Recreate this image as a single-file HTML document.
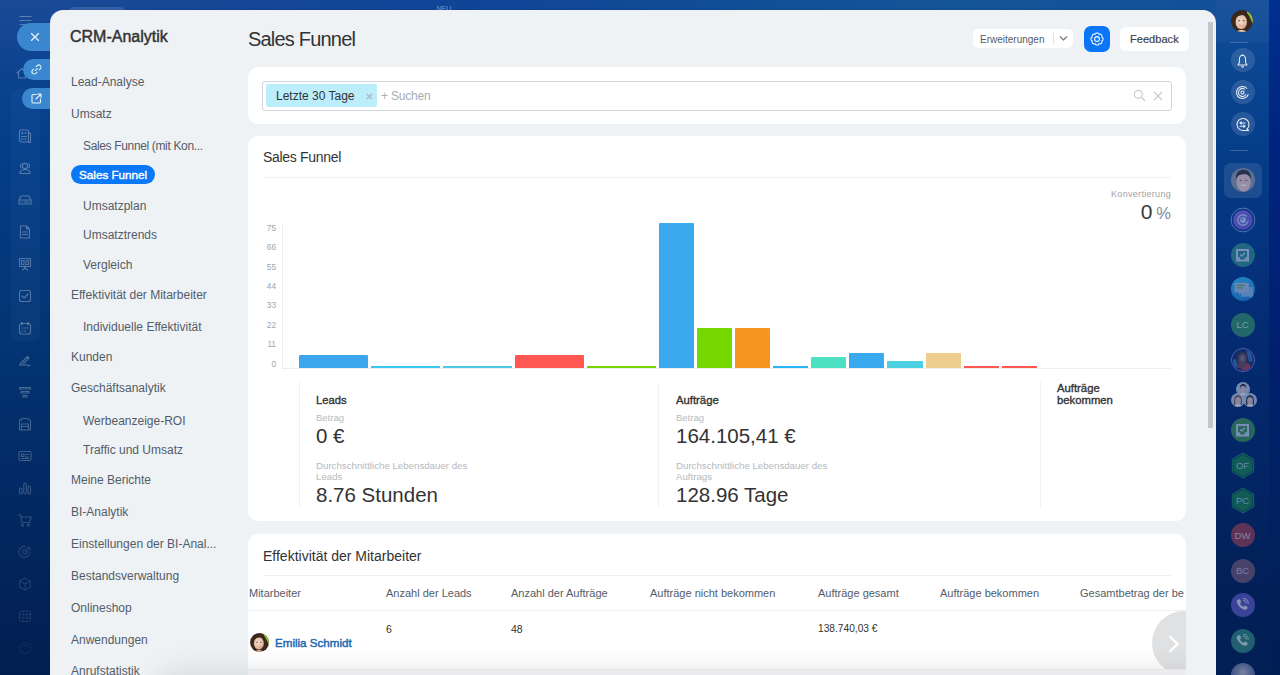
<!DOCTYPE html>
<html><head><meta charset="utf-8">
<style>
*{box-sizing:border-box;margin:0;padding:0}
html,body{width:1280px;height:675px;overflow:hidden}
body{font-family:"Liberation Sans",sans-serif;position:relative;background:linear-gradient(180deg,#1b4d9c 0%,#123f8a 40%,#0b2b68 100%);color:#333}
.a{position:absolute}
.t{position:absolute;white-space:nowrap;line-height:1}
.menu{position:absolute;font-size:12px;color:#535c69;white-space:nowrap;line-height:1}
.card{position:absolute;background:#fff;border-radius:10px}
.yl{position:absolute;font-size:8.3px;color:#9ea4ab;text-align:right;width:20px;left:256px;line-height:1}
.bar{position:absolute}
.th{position:absolute;font-size:11px;color:#535c69;white-space:nowrap;line-height:1;margin-top:-1px}
.li{position:absolute;left:15px;width:20px;height:20px}
.rc{position:absolute;left:1230px;width:25px;height:25px;border-radius:50%}
</style></head>
<body>
<!-- top bar -->
<div class="a" style="left:0;top:0;width:1280px;height:12px;background:linear-gradient(90deg,#1a4a96 0%,#0f4497 36%,#145596 75%,#144e9a 100%)"></div><div class="a" style="left:64px;top:8px;width:1138px;height:3px;background:linear-gradient(180deg,rgba(0,30,90,0) 0%,rgba(0,30,90,0.2) 100%)"></div>
<div class="a" style="left:68px;top:7px;width:58px;height:12px;border-radius:6px;background:rgba(255,255,255,0.13)"></div><div class="t" style="left:436.5px;top:5px;font-size:7px;color:rgba(255,255,255,0.45)">NEU</div>

<!-- left bar -->
<div class="a" style="left:0;top:0;width:50px;height:675px;background:linear-gradient(180deg,#1a4a96 0%,#0a4290 12%,#033e88 23%,#033473 51%,#022258 89%,#01204f 100%)"></div>
<div class="a" style="left:11px;top:89px;width:29px;height:252px;border-radius:8px;background:rgba(160,190,230,0.045)"></div>
<svg class="a" style="left:14px;top:65px" width="16" height="16" viewBox="0 0 16 16"><g fill="none" stroke="rgba(255,255,255,0.30)" stroke-width="1.1" stroke-linecap="round" stroke-linejoin="round"><path d="M3 8 L8 3.5 L13 8 M4.5 7 V13 H11.5 V7" /></g></svg>
<svg class="a" style="left:17px;top:128px" width="16" height="16" viewBox="0 0 16 16"><g fill="none" stroke="rgba(255,255,255,0.30)" stroke-width="1.1" stroke-linecap="round" stroke-linejoin="round"><rect x="2.5" y="2" width="9" height="12" rx="1.5"/><path d="M11.5 5 H13.5 V13 A1 1 0 0 1 11.5 14 M4.5 5 H6 M5.2 4.3 V5.7 M7.5 5 H9.5 M4.5 8.5 H9.5 M4.5 11 H9"/></g></svg>
<svg class="a" style="left:17px;top:160px" width="16" height="16" viewBox="0 0 16 16"><g fill="none" stroke="rgba(255,255,255,0.30)" stroke-width="1.1" stroke-linecap="round" stroke-linejoin="round"><circle cx="8" cy="6" r="2.6"/><path d="M3 13.5 C3 10.5 5 9.5 8 9.5 C11 9.5 13 10.5 13 13.5 Z M4.2 3.8 C3.2 4.8 3.2 6.8 4.2 7.8 M11.8 3.8 C12.8 4.8 12.8 6.8 11.8 7.8"/></g></svg>
<svg class="a" style="left:17px;top:192px" width="16" height="16" viewBox="0 0 16 16"><g fill="none" stroke="rgba(255,255,255,0.30)" stroke-width="1.1" stroke-linecap="round" stroke-linejoin="round"><path d="M2 8 L4 4 H12 L14 8 V12 H2 Z M2 8 H14 M4.5 10 H5 M7 10 H11.5"/></g></svg>
<svg class="a" style="left:17px;top:224px" width="16" height="16" viewBox="0 0 16 16"><g fill="none" stroke="rgba(255,255,255,0.30)" stroke-width="1.1" stroke-linecap="round" stroke-linejoin="round"><path d="M3.5 2 H9.5 L12.5 5 V14 H3.5 Z M9.5 2 V5 H12.5 M5.5 8 H10.5 M5.5 10.5 H10.5"/></g></svg>
<svg class="a" style="left:17px;top:256px" width="16" height="16" viewBox="0 0 16 16"><g fill="none" stroke="rgba(255,255,255,0.30)" stroke-width="1.1" stroke-linecap="round" stroke-linejoin="round"><rect x="2.5" y="2.5" width="11" height="8"/><path d="M8 10.5 V12 M5.5 14 L8 12 L10.5 14 M4.5 4.5 H7 V8.5 H4.5 Z M9 4.5 H11.5 V8.5 H9 Z"/></g></svg>
<svg class="a" style="left:17px;top:288px" width="16" height="16" viewBox="0 0 16 16"><g fill="none" stroke="rgba(255,255,255,0.30)" stroke-width="1.1" stroke-linecap="round" stroke-linejoin="round"><rect x="2.5" y="2.5" width="11" height="11" rx="2"/><path d="M5 8 L7.2 10 L11 6"/></g></svg>
<svg class="a" style="left:17px;top:320px" width="16" height="16" viewBox="0 0 16 16"><g fill="none" stroke="rgba(255,255,255,0.30)" stroke-width="1.1" stroke-linecap="round" stroke-linejoin="round"><rect x="2.5" y="3.5" width="11" height="10.5" rx="2"/><path d="M5 2 V5 M11 2 V5 M5 8 H6 M7.5 8 H8.5 M10 8 H11 M5 11 H6 M7.5 11 H8.5"/></g></svg>
<svg class="a" style="left:17px;top:352px" width="16" height="16" viewBox="0 0 16 16"><g fill="none" stroke="rgba(255,255,255,0.29)" stroke-width="1.1" stroke-linecap="round" stroke-linejoin="round"><path d="M3.5 11.5 L10.5 4.5 L12 6 L5 13 L3 13.5 Z M9.5 5.5 L11 7 M7 13.5 C8.5 12 10 12.5 10.5 13.5 C11 14 12 14 13 13"/></g></svg>
<svg class="a" style="left:17px;top:384px" width="16" height="16" viewBox="0 0 16 16"><g fill="none" stroke="rgba(255,255,255,0.28)" stroke-width="1.1" stroke-linecap="round" stroke-linejoin="round"><path d="M2.5 3.5 H13.5 V5 H2.5 Z M4 7.5 H12 V9 H4 Z M6 11.5 H10 V13 H6 Z"/></g></svg>
<svg class="a" style="left:17px;top:416px" width="16" height="16" viewBox="0 0 16 16"><g fill="none" stroke="rgba(255,255,255,0.26)" stroke-width="1.1" stroke-linecap="round" stroke-linejoin="round"><path d="M2.5 14 V6 C2.5 3.5 4 2.5 8 2.5 C12 2.5 13.5 3.5 13.5 6 V14 Z M4.5 14 V8 H11.5 V14 M4.5 10.5 H11.5"/></g></svg>
<svg class="a" style="left:17px;top:448px" width="16" height="16" viewBox="0 0 16 16"><g fill="none" stroke="rgba(255,255,255,0.25)" stroke-width="1.1" stroke-linecap="round" stroke-linejoin="round"><rect x="2" y="3.5" width="12" height="9" rx="1.5"/><path d="M4.5 6 H7 V8.5 H4.5 Z M8.5 6.5 H11.5 M8.5 9 H11.5 M4.5 10.5 H11.5"/></g></svg>
<svg class="a" style="left:17px;top:480px" width="16" height="16" viewBox="0 0 16 16"><g fill="none" stroke="rgba(255,255,255,0.22)" stroke-width="1.1" stroke-linecap="round" stroke-linejoin="round"><rect x="2.5" y="8" width="2.5" height="6" rx="1.2"/><rect x="6.8" y="3" width="2.5" height="11" rx="1.2"/><rect x="11" y="6" width="2.5" height="8" rx="1.2"/></g></svg>
<svg class="a" style="left:17px;top:512px" width="16" height="16" viewBox="0 0 16 16"><g fill="none" stroke="rgba(255,255,255,0.19)" stroke-width="1.1" stroke-linecap="round" stroke-linejoin="round"><path d="M1.5 3 H3.5 L5 10.5 H12.5 L14 5 H4"/><circle cx="5.5" cy="13" r="1"/><circle cx="11.5" cy="13" r="1"/></g></svg>
<svg class="a" style="left:17px;top:544px" width="16" height="16" viewBox="0 0 16 16"><g fill="none" stroke="rgba(255,255,255,0.15)" stroke-width="1.1" stroke-linecap="round" stroke-linejoin="round"><path d="M13 7.5 A5.5 5.5 0 1 1 8.5 2.5 M10.5 7.5 A2.5 2.5 0 1 1 8.5 5.2 M8 8 L12.5 3.5 M10.5 3 L12.5 3.5 L13 5.5"/></g></svg>
<svg class="a" style="left:17px;top:576px" width="16" height="16" viewBox="0 0 16 16"><g fill="none" stroke="rgba(255,255,255,0.12)" stroke-width="1.1" stroke-linecap="round" stroke-linejoin="round"><path d="M8 2 L13.5 5 V11 L8 14 L2.5 11 V5 Z M2.5 5 L8 8 L13.5 5 M8 8 V14"/></g></svg>
<svg class="a" style="left:17px;top:608px" width="16" height="16" viewBox="0 0 16 16"><g fill="none" stroke="rgba(255,255,255,0.09)" stroke-width="1.1" stroke-linecap="round" stroke-linejoin="round"><rect x="2.5" y="3" width="11" height="10.5" rx="1.5"/><path d="M2.5 6.5 H13.5 M2.5 10 H13.5 M6 3 V13.5 M10 3 V13.5"/></g></svg>
<svg class="a" style="left:17px;top:640px" width="16" height="16" viewBox="0 0 16 16"><g fill="none" stroke="rgba(255,255,255,0.06)" stroke-width="1.1" stroke-linecap="round" stroke-linejoin="round"><circle cx="8" cy="8" r="5.5"/><path d="M6 6.5 C6.5 5 9.5 5 10 6.5"/></g></svg>
<svg class="a" style="left:19px;top:15px" width="13" height="11" viewBox="0 0 13 11"><path d="M0.5 1.5H12.5M0.5 5.5H12.5M0.5 9.5H12.5" stroke="rgba(255,255,255,0.3)" stroke-width="1"/></svg>

<!-- right bar -->
<div class="a" style="left:1216px;top:0;width:53px;height:675px;background:linear-gradient(180deg,#144e9a 0%,#0b4692 10%,#053e8a 21%,#042b72 50%,#022058 87%,#021f55 100%)"></div>
<div class="a" style="left:1216px;top:0;width:53px;height:42px;background:rgba(255,255,255,0.03)"></div>
<div class="a" style="left:1269px;top:0;width:11px;height:675px;background:linear-gradient(180deg,#00308f 0%,#00247f 21%,#002070 50%,#01205a 87%,#011e55 100%)"></div>
<div class="a" style="left:1230px;top:42px;width:18px;height:1px;background:rgba(255,255,255,0.2)"></div>
<div class="a" style="left:1230px;top:150px;width:18px;height:1px;background:rgba(255,255,255,0.2)"></div>

<!-- close / link / open pills -->
<div class="a" style="left:17px;top:23px;width:60px;height:28px;border-radius:14px;background:#3a87cf"></div>
<div class="a" style="left:23px;top:59px;width:50px;height:21px;border-radius:11px;background:#3a87cf"></div>
<div class="a" style="left:22px;top:88px;width:50px;height:21px;border-radius:11px;background:#3a87cf"></div>
<svg class="a" style="left:30px;top:32px" width="10" height="10" viewBox="0 0 10 10"><path d="M1.2 1.2L8.8 8.8M8.8 1.2L1.2 8.8" stroke="#e8f1fa" stroke-width="1.3"/></svg>
<svg class="a" style="left:29.5px;top:63px" width="13" height="13" viewBox="0 0 13 13"><g fill="none" stroke="#e8f1fa" stroke-width="1.15" stroke-linecap="round" transform="translate(6.5 6.5) scale(0.9) translate(-6.5 -6.5)"><path d="M5.5 7.5 L7.5 5.5"/><path d="M6 3.5 L7.3 2.2 A2.1 2.1 0 0 1 10.8 5.7 L9.5 7"/><path d="M7 9.5 L5.7 10.8 A2.1 2.1 0 0 1 2.2 7.3 L3.5 6"/></g></svg>
<svg class="a" style="left:29.5px;top:91.5px" width="13" height="13" viewBox="0 0 13 13"><g fill="none" stroke="#e8f1fa" stroke-width="1.1" stroke-linecap="round" stroke-linejoin="round"><path d="M6 2.5 H3 A1 1 0 0 0 2 3.5 V10 A1 1 0 0 0 3 11 H9.5 A1 1 0 0 0 10.5 10 V7"/><path d="M7.5 2 H11 V5.5 M11 2 L6 7"/></g></svg>

<!-- panel -->
<div class="a" style="left:50px;top:10px;width:1166px;height:700px;background:#eef2f4;border-radius:13px 13px 0 0"></div>
<!-- scrollbar -->
<div class="a" style="left:1208px;top:22px;width:5px;height:406px;background:#c4c8cb"></div>

<!-- left menu -->
<div class="t" style="left:70px;top:28.5px;font-size:16px;color:#333;-webkit-text-stroke:0.45px #333">CRM-Analytik</div>
<div class="menu" style="left:71px;top:76px">Lead-Analyse</div>
<div class="menu" style="left:71px;top:108px">Umsatz</div>
<div class="menu" style="left:83px;top:140px;letter-spacing:-0.35px">Sales Funnel (mit Kon...</div>
<div class="a" style="left:71px;top:165px;width:84px;height:19px;border-radius:10px;background:#0b78f7"></div>
<div class="menu" style="left:79px;top:168.5px;color:#fff;font-size:11.7px;-webkit-text-stroke:0.4px #fff">Sales Funnel</div>
<div class="menu" style="left:83px;top:200px">Umsatzplan</div>
<div class="menu" style="left:83px;top:229px">Umsatztrends</div>
<div class="menu" style="left:83px;top:259px">Vergleich</div>
<div class="menu" style="left:71px;top:289px">Effektivität der Mitarbeiter</div>
<div class="menu" style="left:83px;top:321px">Individuelle Effektivität</div>
<div class="menu" style="left:71px;top:351px">Kunden</div>
<div class="menu" style="left:71px;top:382px">Geschäftsanalytik</div>
<div class="menu" style="left:83px;top:415px">Werbeanzeige-ROI</div>
<div class="menu" style="left:83px;top:444px">Traffic und Umsatz</div>
<div class="menu" style="left:71px;top:474px">Meine Berichte</div>
<div class="menu" style="left:71px;top:506px">BI-Analytik</div>
<div class="menu" style="left:71px;top:538px">Einstellungen der BI-Anal...</div>
<div class="menu" style="left:71px;top:570px">Bestandsverwaltung</div>
<div class="menu" style="left:71px;top:602px">Onlineshop</div>
<div class="menu" style="left:71px;top:634px">Anwendungen</div>
<div class="menu" style="left:71px;top:665px">Anrufstatistik</div>

<!-- title -->
<div class="t" style="left:248px;top:29px;font-size:20px;color:#333;letter-spacing:-0.8px">Sales Funnel</div>

<!-- header buttons -->
<div class="a" style="left:973px;top:29px;width:100px;height:19px;border-radius:5px;background:#fff"></div>
<div class="t" style="left:980px;top:35px;font-size:10px;color:#535c69">Erweiterungen</div>
<div class="a" style="left:1053px;top:33px;width:1px;height:11px;background:#dfe3e6"></div>
<svg class="a" style="left:1059px;top:35px" width="9" height="7" viewBox="0 0 9 7"><path d="M1 1.5 L4.5 5 L8 1.5" fill="none" stroke="#6a737f" stroke-width="1.1"/></svg>
<div class="a" style="left:1084px;top:26px;width:26px;height:26px;border-radius:7px;background:#0b75f8"></div>
<svg class="a" style="left:1088.6px;top:30.6px" width="16" height="16" viewBox="0 0 16 16"><path d="M14.10 8.00 L14.10 8.12 L14.08 8.24 L14.06 8.36 L14.04 8.48 L14.00 8.59 L13.96 8.71 L13.91 8.82 L13.85 8.93 L13.79 9.03 L13.72 9.14 L13.64 9.24 L13.56 9.34 L13.47 9.43 L13.38 9.52 L13.28 9.60 L13.18 9.68 L13.07 9.76 L12.96 9.83 L12.84 9.90 L12.71 9.95 L12.77 10.08 L12.80 10.21 L12.83 10.34 L12.85 10.47 L12.87 10.60 L12.88 10.73 L12.88 10.86 L12.88 10.99 L12.87 11.12 L12.85 11.24 L12.83 11.36 L12.79 11.48 L12.76 11.60 L12.71 11.72 L12.66 11.83 L12.60 11.93 L12.54 12.04 L12.47 12.13 L12.40 12.23 L12.31 12.31 L12.23 12.40 L12.13 12.47 L12.04 12.54 L11.93 12.60 L11.83 12.66 L11.72 12.71 L11.60 12.76 L11.48 12.79 L11.36 12.83 L11.24 12.85 L11.12 12.87 L10.99 12.88 L10.86 12.88 L10.73 12.88 L10.60 12.87 L10.47 12.85 L10.34 12.83 L10.21 12.80 L10.08 12.77 L9.95 12.71 L9.90 12.84 L9.83 12.96 L9.76 13.07 L9.68 13.18 L9.60 13.28 L9.52 13.38 L9.43 13.47 L9.34 13.56 L9.24 13.64 L9.14 13.72 L9.03 13.79 L8.93 13.85 L8.82 13.91 L8.71 13.96 L8.59 14.00 L8.48 14.04 L8.36 14.06 L8.24 14.08 L8.12 14.10 L8.00 14.10 L7.88 14.10 L7.76 14.08 L7.64 14.06 L7.52 14.04 L7.41 14.00 L7.29 13.96 L7.18 13.91 L7.07 13.85 L6.97 13.79 L6.86 13.72 L6.76 13.64 L6.66 13.56 L6.57 13.47 L6.48 13.38 L6.40 13.28 L6.32 13.18 L6.24 13.07 L6.17 12.96 L6.10 12.84 L6.05 12.71 L5.92 12.77 L5.79 12.80 L5.66 12.83 L5.53 12.85 L5.40 12.87 L5.27 12.88 L5.14 12.88 L5.01 12.88 L4.88 12.87 L4.76 12.85 L4.64 12.83 L4.52 12.79 L4.40 12.76 L4.28 12.71 L4.17 12.66 L4.07 12.60 L3.96 12.54 L3.87 12.47 L3.77 12.40 L3.69 12.31 L3.60 12.23 L3.53 12.13 L3.46 12.04 L3.40 11.93 L3.34 11.83 L3.29 11.72 L3.24 11.60 L3.21 11.48 L3.17 11.36 L3.15 11.24 L3.13 11.12 L3.12 10.99 L3.12 10.86 L3.12 10.73 L3.13 10.60 L3.15 10.47 L3.17 10.34 L3.20 10.21 L3.23 10.08 L3.29 9.95 L3.16 9.90 L3.04 9.83 L2.93 9.76 L2.82 9.68 L2.72 9.60 L2.62 9.52 L2.53 9.43 L2.44 9.34 L2.36 9.24 L2.28 9.14 L2.21 9.03 L2.15 8.93 L2.09 8.82 L2.04 8.71 L2.00 8.59 L1.96 8.48 L1.94 8.36 L1.92 8.24 L1.90 8.12 L1.90 8.00 L1.90 7.88 L1.92 7.76 L1.94 7.64 L1.96 7.52 L2.00 7.41 L2.04 7.29 L2.09 7.18 L2.15 7.07 L2.21 6.97 L2.28 6.86 L2.36 6.76 L2.44 6.66 L2.53 6.57 L2.62 6.48 L2.72 6.40 L2.82 6.32 L2.93 6.24 L3.04 6.17 L3.16 6.10 L3.29 6.05 L3.23 5.92 L3.20 5.79 L3.17 5.66 L3.15 5.53 L3.13 5.40 L3.12 5.27 L3.12 5.14 L3.12 5.01 L3.13 4.88 L3.15 4.76 L3.17 4.64 L3.21 4.52 L3.24 4.40 L3.29 4.28 L3.34 4.17 L3.40 4.07 L3.46 3.96 L3.53 3.87 L3.60 3.77 L3.69 3.69 L3.77 3.60 L3.87 3.53 L3.96 3.46 L4.07 3.40 L4.17 3.34 L4.28 3.29 L4.40 3.24 L4.52 3.21 L4.64 3.17 L4.76 3.15 L4.88 3.13 L5.01 3.12 L5.14 3.12 L5.27 3.12 L5.40 3.13 L5.53 3.15 L5.66 3.17 L5.79 3.20 L5.92 3.23 L6.05 3.29 L6.10 3.16 L6.17 3.04 L6.24 2.93 L6.32 2.82 L6.40 2.72 L6.48 2.62 L6.57 2.53 L6.66 2.44 L6.76 2.36 L6.86 2.28 L6.97 2.21 L7.07 2.15 L7.18 2.09 L7.29 2.04 L7.41 2.00 L7.52 1.96 L7.64 1.94 L7.76 1.92 L7.88 1.90 L8.00 1.90 L8.12 1.90 L8.24 1.92 L8.36 1.94 L8.48 1.96 L8.59 2.00 L8.71 2.04 L8.82 2.09 L8.93 2.15 L9.03 2.21 L9.14 2.28 L9.24 2.36 L9.34 2.44 L9.43 2.53 L9.52 2.62 L9.60 2.72 L9.68 2.82 L9.76 2.93 L9.83 3.04 L9.90 3.16 L9.95 3.29 L10.08 3.23 L10.21 3.20 L10.34 3.17 L10.47 3.15 L10.60 3.13 L10.73 3.12 L10.86 3.12 L10.99 3.12 L11.12 3.13 L11.24 3.15 L11.36 3.17 L11.48 3.21 L11.60 3.24 L11.72 3.29 L11.83 3.34 L11.93 3.40 L12.04 3.46 L12.13 3.53 L12.23 3.60 L12.31 3.69 L12.40 3.77 L12.47 3.87 L12.54 3.96 L12.60 4.07 L12.66 4.17 L12.71 4.28 L12.76 4.40 L12.79 4.52 L12.83 4.64 L12.85 4.76 L12.87 4.88 L12.88 5.01 L12.88 5.14 L12.88 5.27 L12.87 5.40 L12.85 5.53 L12.83 5.66 L12.80 5.79 L12.77 5.92 L12.71 6.05 L12.84 6.10 L12.96 6.17 L13.07 6.24 L13.18 6.32 L13.28 6.40 L13.38 6.48 L13.47 6.57 L13.56 6.66 L13.64 6.76 L13.72 6.86 L13.79 6.97 L13.85 7.07 L13.91 7.18 L13.96 7.29 L14.00 7.41 L14.04 7.52 L14.06 7.64 L14.08 7.76 L14.10 7.88 L14.10 8.00 Z" fill="none" stroke="#fff" stroke-width="1.05" stroke-linejoin="round"/><circle cx="8" cy="8" r="2.4" fill="none" stroke="#fff" stroke-width="1.05"/></svg>
<div class="a" style="left:1120px;top:27px;width:69px;height:24px;border-radius:6px;background:#fff"></div>
<div class="t" style="left:1130px;top:34px;font-size:11px;color:#3d434b;letter-spacing:0.05px;-webkit-text-stroke:0.2px #3d434b">Feedback</div>

<!-- filter card -->
<div class="card" style="left:248px;top:67px;width:938px;height:57px"></div>
<div class="a" style="left:262px;top:81px;width:910px;height:30px;border:1px solid #d0d6db;border-radius:3px;background:#fff"></div>
<div class="a" style="left:266px;top:84px;width:111px;height:23px;border-radius:2px;background:#bcedfb"></div>
<div class="t" style="left:276px;top:90px;font-size:12px;color:#333">Letzte 30 Tage</div>
<svg class="a" style="left:365.5px;top:92.5px" width="7" height="7" viewBox="0 0 7 7"><path d="M0.8 0.8L6.2 6.2M6.2 0.8L0.8 6.2" stroke="#a3b3bd" stroke-width="1.2"/></svg>
<div class="t" style="left:381px;top:90px;font-size:12px;color:#a8adb4;letter-spacing:-0.2px">+ Suchen</div>
<svg class="a" style="left:1133px;top:89px" width="13" height="13" viewBox="0 0 13 13"><circle cx="5.3" cy="5.3" r="4" fill="none" stroke="#c6ccd1" stroke-width="1.15"/><path d="M8.3 8.3L12 12" stroke="#c6ccd1" stroke-width="1.3"/></svg>
<svg class="a" style="left:1153px;top:91px" width="10" height="10" viewBox="0 0 10 10"><path d="M1 1L9 9M9 1L1 9" stroke="#c6ccd1" stroke-width="1.15"/></svg>

<!-- funnel card -->
<div class="card" style="left:248px;top:136px;width:938px;height:385px"></div>
<div class="t" style="left:263px;top:150px;font-size:14px;color:#333;letter-spacing:-0.3px">Sales Funnel</div>
<div class="a" style="left:263px;top:177px;width:908px;height:1px;background:#eef0f2"></div>
<div class="t" style="left:1060px;top:190px;width:111px;text-align:right;font-size:9px;color:#a2a2a2;letter-spacing:0.3px">Konvertierung</div>
<div class="t" style="left:1100px;top:201px;width:71px;text-align:right;font-size:21px;color:#3a3a3a"><span>0</span><span style="font-size:16.5px;color:#7d8b9b;margin-left:4px">%</span></div>

<div class="a" style="left:282px;top:223px;width:1px;height:145px;background:#eceef0"></div>
<div class="a" style="left:282px;top:368px;width:889px;height:1px;background:#eceef0"></div>
<div class="bar" style="left:299px;top:355px;width:69px;height:13px;background:#3aa6ec;border-radius:1px 1px 0 0;"></div>
<div class="bar" style="left:371px;top:366px;width:69px;height:2px;background:#3bc8f5;"></div>
<div class="bar" style="left:443px;top:366px;width:69px;height:2px;background:#4fc8e8;"></div>
<div class="bar" style="left:515px;top:355px;width:69px;height:13px;background:#ff5752;border-radius:1px 1px 0 0;"></div>
<div class="bar" style="left:587px;top:366px;width:69px;height:2px;background:#7bd500;"></div>
<div class="bar" style="left:659px;top:223px;width:35px;height:145px;background:#3aa9ee;border-radius:1px 1px 0 0;"></div>
<div class="bar" style="left:697px;top:328px;width:35px;height:40px;background:#75d800;border-radius:1px 1px 0 0;"></div>
<div class="bar" style="left:735px;top:328px;width:35px;height:40px;background:#f7961f;border-radius:1px 1px 0 0;"></div>
<div class="bar" style="left:773px;top:366px;width:35px;height:2px;background:#29b6f6;"></div>
<div class="bar" style="left:811px;top:357px;width:35px;height:11px;background:#4ee1c1;border-radius:1px 1px 0 0;"></div>
<div class="bar" style="left:849px;top:353px;width:35px;height:15px;background:#3aa9ee;border-radius:1px 1px 0 0;"></div>
<div class="bar" style="left:887px;top:361px;width:36px;height:7px;background:#4dd0e1;border-radius:1px 1px 0 0;"></div>
<div class="bar" style="left:926px;top:353px;width:35px;height:15px;background:#edce8f;border-radius:1px 1px 0 0;"></div>
<div class="bar" style="left:964px;top:366px;width:35px;height:2px;background:#ff5752;"></div>
<div class="bar" style="left:1002px;top:366px;width:35px;height:2px;background:#ff5752;"></div>
<div class="yl" style="top:223.6px">75</div>
<div class="yl" style="top:243.2px">66</div>
<div class="yl" style="top:262.7px">55</div>
<div class="yl" style="top:282.0px">44</div>
<div class="yl" style="top:301.4px">33</div>
<div class="yl" style="top:321.0px">22</div>
<div class="yl" style="top:340.4px">11</div>
<div class="yl" style="top:360.0px">0</div>

<!-- stats -->
<div class="a" style="left:299px;top:382px;width:1px;height:125px;background:#eef0f2"></div>
<div class="a" style="left:658px;top:382px;width:1px;height:125px;background:#eef0f2"></div>
<div class="a" style="left:1040px;top:382px;width:1px;height:125px;background:#eef0f2"></div>
<div class="t" style="left:316px;top:394.5px;font-size:11.2px;color:#333;-webkit-text-stroke:0.35px #333">Leads</div>
<div class="t" style="left:316px;top:413px;font-size:9.5px;color:#b5bac0">Betrag</div>
<div class="t" style="left:316px;top:426px;font-size:20.5px;color:#333">0 €</div>
<div class="t" style="left:316px;top:461px;font-size:9.7px;color:#b5bac0;line-height:10.5px">Durchschnittliche Lebensdauer des<br>Leads</div>
<div class="t" style="left:316px;top:485px;font-size:20.5px;color:#333">8.76 Stunden</div>

<div class="t" style="left:676px;top:394.5px;font-size:11.3px;color:#333;-webkit-text-stroke:0.35px #333">Aufträge</div>
<div class="t" style="left:676px;top:413px;font-size:9.5px;color:#b5bac0">Betrag</div>
<div class="t" style="left:676px;top:426px;font-size:20.5px;color:#333">164.105,41 €</div>
<div class="t" style="left:676px;top:461px;font-size:9.7px;color:#b5bac0;line-height:10.5px">Durchschnittliche Lebensdauer des<br>Auftrags</div>
<div class="t" style="left:676px;top:485px;font-size:20.5px;color:#333">128.96 Tage</div>

<div class="t" style="left:1057px;top:381.5px;font-size:11.3px;color:#333;line-height:12px;-webkit-text-stroke:0.35px #333">Aufträge<br>bekommen</div>

<!-- table card -->
<div class="card" style="left:248px;top:534px;width:938px;height:200px"></div>
<div class="t" style="left:263px;top:549px;font-size:14px;color:#333">Effektivität der Mitarbeiter</div>
<div class="a" style="left:263px;top:575px;width:908px;height:1px;background:#eef0f2"></div>
<div class="th" style="left:249px;top:589px">Mitarbeiter</div>
<div class="th" style="left:386px;top:589px">Anzahl der Leads</div>
<div class="th" style="left:511px;top:589px">Anzahl der Aufträge</div>
<div class="th" style="left:650px;top:589px">Aufträge nicht bekommen</div>
<div class="th" style="left:818px;top:589px">Aufträge gesamt</div>
<div class="th" style="left:940px;top:589px">Aufträge bekommen</div>
<div class="a" style="left:1080px;top:585px;width:104px;height:20px;overflow:hidden"><div class="th" style="left:0;top:4px">Gesamtbetrag der bekommenen</div></div>
<div class="a" style="left:248px;top:610px;width:938px;height:1px;background:#eef0f2"></div>
<div class="t" style="left:386px;top:624px;font-size:10.5px;color:#333">6</div>
<div class="t" style="left:511px;top:624px;font-size:10.5px;color:#333">48</div>
<div class="t" style="left:818px;top:624px;font-size:10.2px;color:#333">138.740,03 €</div>
<svg class="a" style="left:249.5px;top:633px" width="19" height="19" viewBox="0 0 22 22"><defs><clipPath id="av2"><circle cx="11" cy="11" r="10.9"/></clipPath><radialGradient id="av2f" cx="0.45" cy="0.45" r="0.6"><stop offset="0" stop-color="#f3dccd"/><stop offset="0.7" stop-color="#e5bfa6"/><stop offset="1" stop-color="#b98468"/></radialGradient></defs><g clip-path="url(#av2)"><rect width="22" height="22" fill="#3b271c"/><path d="M16 0 L22 0 L22 14 C20 11 19 6 16 3 Z" fill="#8cbf3a"/><ellipse cx="10.3" cy="12" rx="5.8" ry="7.3" fill="url(#av2f)"/><path d="M4 6 C6 2 14 2 16.5 6 C14 4.5 8 4.5 4.5 8 Z" fill="#3b271c"/><ellipse cx="8.3" cy="10.7" rx="1" ry="0.6" fill="#6b4a3a"/><ellipse cx="12.6" cy="10.7" rx="1" ry="0.6" fill="#6b4a3a"/><path d="M8.3 15 C9.5 16.5 11.8 16.5 13 15 C11.8 15.6 9.5 15.6 8.3 15 Z" fill="#fff" stroke="#c88a78" stroke-width="0.5"/><path d="M6 21 C8 19.5 13 19.5 15 21 L15 22 L6 22 Z" fill="#e5bfa6"/></g></svg>
<div class="t" style="left:275px;top:636.5px;font-size:11.6px;color:#2067b0;-webkit-text-stroke:0.45px #2067b0">Emilia Schmidt</div>
<div class="a" style="left:1152px;top:611px;width:34px;height:64px;overflow:hidden"><div class="a" style="left:0;top:0;width:64px;height:64px;border-radius:50%;background:rgba(0,10,20,0.12)"></div></div>
<svg class="a" style="left:1166px;top:634px" width="14" height="20" viewBox="0 0 14 20"><path d="M3.5 2L11.5 10L3.5 18" fill="none" stroke="#fff" stroke-width="2.4"/></svg>

<!-- bottom shade -->
<div class="a" style="left:50px;top:620px;width:1136px;height:55px;overflow:hidden"><div class="a" style="left:110px;top:56px;width:1100px;height:40px;border-radius:20px;box-shadow:0 0 26px 6px rgba(60,70,85,0.13)"></div></div>
<div class="a" style="left:248px;top:669px;width:938px;height:6px;background:#ececee;border-top:1px solid #e3e4e6"></div>

<svg class="a" style="left:1231.3px;top:9.8px" width="22" height="22" viewBox="0 0 22 22"><defs><clipPath id="av1"><circle cx="11" cy="11" r="10.9"/></clipPath><radialGradient id="av1f" cx="0.45" cy="0.45" r="0.6"><stop offset="0" stop-color="#f3dccd"/><stop offset="0.7" stop-color="#e5bfa6"/><stop offset="1" stop-color="#b98468"/></radialGradient></defs><g clip-path="url(#av1)"><rect width="22" height="22" fill="#3b271c"/><path d="M16 0 L22 0 L22 14 C20 11 19 6 16 3 Z" fill="#8cbf3a"/><ellipse cx="10.3" cy="12" rx="5.8" ry="7.3" fill="url(#av1f)"/><path d="M4 6 C6 2 14 2 16.5 6 C14 4.5 8 4.5 4.5 8 Z" fill="#3b271c"/><ellipse cx="8.3" cy="10.7" rx="1" ry="0.6" fill="#6b4a3a"/><ellipse cx="12.6" cy="10.7" rx="1" ry="0.6" fill="#6b4a3a"/><path d="M8.3 15 C9.5 16.5 11.8 16.5 13 15 C11.8 15.6 9.5 15.6 8.3 15 Z" fill="#fff" stroke="#c88a78" stroke-width="0.5"/><path d="M6 21 C8 19.5 13 19.5 15 21 L15 22 L6 22 Z" fill="#e5bfa6"/></g></svg>
<div class="a" style="left:1230.5px;top:48px;width:24px;height:24px;border-radius:50%;background:rgba(255,255,255,0.13);"></div>
<div class="a" style="left:1230.5px;top:80px;width:24px;height:24px;border-radius:50%;background:rgba(255,255,255,0.13);"></div>
<div class="a" style="left:1230.5px;top:112px;width:24px;height:24px;border-radius:50%;background:rgba(255,255,255,0.13);"></div>
<svg class="a" style="left:1235px;top:52.5px" width="15" height="16" viewBox="0 0 15 16"><g fill="none" stroke="#e6ecf5" stroke-width="1.05" stroke-linejoin="round"><path d="M7.5 2.3 C5.4 2.3 4.4 4.2 4.4 6.6 V9.6 L3 12 H12 L10.6 9.6 V6.6 C10.6 4.2 9.6 2.3 7.5 2.3 Z"/><path d="M6.3 13.3 A1.3 1.3 0 0 0 8.7 13.3"/><path d="M7.5 1.2 V2.3"/></g></svg>
<svg class="a" style="left:1235px;top:84.5px" width="15" height="15" viewBox="0 0 15 15"><g fill="none" stroke="#e6ecf5" stroke-width="1.05" stroke-linecap="round"><path d="M11.74 3.26 A6 6 0 1 0 13.14 9.55"/><path d="M9.45 4.12 A3.9 3.9 0 1 0 10.69 9.74"/><circle cx="7.5" cy="7.5" r="1.6"/></g></svg>
<svg class="a" style="left:1235px;top:117px" width="15" height="15" viewBox="0 0 15 15"><g fill="none" stroke="#e6ecf5" stroke-width="1.1" stroke-linecap="round" stroke-linejoin="round"><path d="M13.5 13.5 L12 12 A6 6 0 1 0 7.5 13.5 H13.5"/><path d="M5 6 H10 M5 6 L6.3 4.8 M5 6 L6.3 7.2 M10 9.2 H5 M10 9.2 L8.7 8 M10 9.2 L8.7 10.4"/></g></svg>
<div class="a" style="left:1224px;top:162.5px;width:38px;height:35px;border-radius:7px;background:rgba(255,255,255,0.10)"></div>
<div style="opacity:0.74">
<svg class="a" style="left:1230.5px;top:168px" width="24" height="24" viewBox="0 0 24 24"><defs><clipPath id="mav"><circle cx="12" cy="12" r="12"/></clipPath></defs><g clip-path="url(#mav)"><rect width="24" height="24" fill="#737b94"/><ellipse cx="12.6" cy="14" rx="7.2" ry="9.5" fill="#c2a4ac"/><path d="M5 11 C4.5 4 8.5 1.8 12.5 1.8 C17 1.8 20.5 4.5 19.8 12 C19 8 17 6.2 12.8 6.2 C9 6.2 6.5 7.5 5 11 Z" fill="#2b2a36"/><ellipse cx="9.7" cy="12.3" rx="1.1" ry="0.6" fill="#5a4a58"/><ellipse cx="15.2" cy="12.3" rx="1.1" ry="0.6" fill="#5a4a58"/><path d="M9.6 16.8 C11 18.4 14 18.4 15.4 16.8 Z" fill="#e8e4ea"/></g></svg>
<svg class="a" style="left:1229.6px;top:206.5px" width="26" height="26" viewBox="0 0 26 26"><defs><linearGradient id="cpg" x1="0" y1="0" x2="1" y2="1"><stop offset="0" stop-color="#7f58cc"/><stop offset="1" stop-color="#5650b8"/></linearGradient></defs><circle cx="13" cy="13" r="11.9" fill="none" stroke="rgba(150,160,225,0.75)" stroke-width="1"/><circle cx="13" cy="13" r="9.8" fill="url(#cpg)"/><path d="M16.34 9.02 A5.2 5.2 0 1 0 18.02 14.35" fill="none" stroke="#9ab8d0" stroke-width="1.3" stroke-linecap="round"/><circle cx="13" cy="13" r="2.9" fill="#9ab8d0"/><circle cx="12.2" cy="12" r="0.9" fill="#6a56c0"/></svg>
<div class="a" style="left:1230.5px;top:242.5px;width:24px;height:24px;border-radius:50%;background:#2a7a82;"></div>
<svg class="a" style="left:1236px;top:248.5px" width="13" height="13" viewBox="0 0 13 13"><rect x="0" y="0" width="13" height="12.5" fill="#9fb0d6"/><path d="M2 2 H11 V8.2 H8.8 V10.5 H4.2 V8.2 H2 Z" fill="#26777f"/><path d="M4.1 5.4 L5.9 7 L9.1 3.7" fill="none" stroke="#9fb0d6" stroke-width="1.3"/></svg>

<svg class="a" style="left:1229.5px;top:276.3px" width="26" height="26" viewBox="0 0 26 26"><defs><linearGradient id="chg" x1="0.2" y1="0" x2="0.6" y2="1"><stop offset="0" stop-color="#2fa6dc"/><stop offset="1" stop-color="#1f72c2"/></linearGradient></defs><circle cx="13" cy="13" r="12" fill="url(#chg)"/><path d="M11 11 H22 A1.2 1.2 0 0 1 23.2 12.2 V19.5 A1.2 1.2 0 0 1 22 20.7 H21.5 L22.5 22.3 L19.5 20.7 H11 Z" fill="#78a6d6" opacity="0.85"/><path d="M5.7 6.8 H17.6 A1.3 1.3 0 0 1 18.9 8.1 V15.2 A1.3 1.3 0 0 1 17.6 16.5 H11.5 L8.8 19.2 L9.2 16.5 H5.7 A1.3 1.3 0 0 1 4.4 15.2 V8.1 A1.3 1.3 0 0 1 5.7 6.8 Z" fill="#8fa3cc"/><path d="M6.6 9.4 H14.8 M6.6 11.8 H13.4" stroke="#4f9a52" stroke-width="1.3"/></svg>
<div class="a" style="left:1230.5px;top:312.5px;width:24px;height:24px;border-radius:50%;background:#2d7d69;"></div>
<div class="t" style="left:1230.5px;top:320px;width:24px;text-align:center;font-size:9.5px;color:#9cc0b4">LC</div>
<div class="a" style="left:1230.5px;top:347.5px;width:24px;height:24px;border-radius:50%;background:transparent;border:1px solid rgba(150,130,230,0.8)"></div>
<svg class="a" style="left:1231.5px;top:348.5px" width="22" height="22" viewBox="0 0 22 22"><defs><clipPath id="pav"><circle cx="11" cy="11" r="10.6"/></clipPath></defs><g clip-path="url(#pav)"><rect width="22" height="22" fill="#1c2c62"/><path d="M14 1 L19 3 L21 12 L17 13 Z" fill="#2f64a8"/><path d="M1 11 L4 10 L6 19 L2 18 Z" fill="#2f6aa8"/><path d="M9 22 C9.5 17 11.5 14 15 14 C18 14 19 17 19 22 Z" fill="#8a3a58"/><path d="M6 19 C5 9 6.5 3.5 10.5 3.5 C14 3.5 15.5 7 14.5 15 C13 18 8 20 6 19 Z" fill="#5a4452"/><ellipse cx="10.6" cy="9.5" rx="2.3" ry="3.2" fill="#6e6282"/></g></svg>
<svg class="a" style="left:1230.6px;top:393px" width="14" height="14" viewBox="0 0 14 14"><defs><clipPath id="gh2"><circle cx="7" cy="7" r="6.8"/></clipPath></defs><g clip-path="url(#gh2)"><rect width="14" height="14" fill="#9aa8c8"/><path d="M3.2 12 C2.5 5 4 2.2 7 2.2 C10 2.2 11.5 5 10.8 12 L9.6 12 L9.6 6 C8.5 5 5.5 5 4.4 6 L4.4 12 Z" fill="#6e5048"/><ellipse cx="7" cy="7.6" rx="2.7" ry="3.5" fill="#b8a6b0"/><path d="M3 14 C3.5 11.5 5 11 7 11 C9 11 10.5 11.5 11 14 Z" fill="#c9ccd8"/></g><circle cx="7" cy="7" r="6.6" fill="none" stroke="#a9b6d2" stroke-width="0.6"/></svg>
<svg class="a" style="left:1242.6px;top:393px" width="14" height="14" viewBox="0 0 14 14"><defs><clipPath id="gh3"><circle cx="7" cy="7" r="6.8"/></clipPath></defs><g clip-path="url(#gh3)"><rect width="14" height="14" fill="#9aa8c8"/><path d="M3.2 12 C2.5 5 4 2.2 7 2.2 C10 2.2 11.5 5 10.8 12 L9.6 12 L9.6 6 C8.5 5 5.5 5 4.4 6 L4.4 12 Z" fill="#2b2a38"/><ellipse cx="7" cy="7.6" rx="2.7" ry="3.5" fill="#b8a6b0"/><path d="M3 14 C3.5 11.5 5 11 7 11 C9 11 10.5 11.5 11 14 Z" fill="#c9ccd8"/></g><circle cx="7" cy="7" r="6.6" fill="none" stroke="#a9b6d2" stroke-width="0.6"/></svg>
<svg class="a" style="left:1235.7px;top:382.2px" width="14" height="14" viewBox="0 0 14 14"><defs><clipPath id="gh1"><circle cx="7" cy="7" r="6.8"/></clipPath></defs><g clip-path="url(#gh1)"><rect width="14" height="14" fill="#9aa8c8"/><path d="M4 7 C3.8 3 5.5 2 7 2 C9 2 10.3 3 10 7 C9.5 5 8.5 4.3 7 4.3 C5.5 4.3 4.5 5 4 7 Z" fill="#2a2a36"/><ellipse cx="7" cy="7.6" rx="2.7" ry="3.5" fill="#b8a6b0"/><path d="M3 14 C3.5 11.5 5 11 7 11 C9 11 10.5 11.5 11 14 Z" fill="#c9ccd8"/></g><circle cx="7" cy="7" r="6.6" fill="none" stroke="#a9b6d2" stroke-width="0.6"/></svg>
<div class="a" style="left:1230.5px;top:417.5px;width:24px;height:24px;border-radius:50%;background:#367d58;"></div>
<svg class="a" style="left:1236px;top:423.5px" width="13" height="13" viewBox="0 0 13 13"><rect x="0" y="0" width="13" height="12.5" fill="#9fb0d6"/><path d="M2 2 H11 V8.2 H8.8 V10.5 H4.2 V8.2 H2 Z" fill="#367d58"/><path d="M4.1 5.4 L5.9 7 L9.1 3.7" fill="none" stroke="#9fb0d6" stroke-width="1.3"/></svg>
<svg class="a" style="left:1229.5px;top:451.9px" width="26" height="27" viewBox="0 0 26 27"><polygon points="13.00,1.20 23.65,7.35 23.65,19.65 13.00,25.80 2.35,19.65 2.35,7.35" fill="none" stroke="#197a5c" stroke-width="1.1"/><polygon points="13.00,2.80 22.27,8.15 22.27,18.85 13.00,24.20 3.73,18.85 3.73,8.15" fill="#17704f" stroke="#17704f" stroke-width="0.8" stroke-linejoin="round"/></svg><div class="t" style="left:1230.5px;top:460.7px;width:24px;text-align:center;font-size:9.5px;color:#8ea6c2">OF</div>
<svg class="a" style="left:1229.5px;top:486.9px" width="26" height="27" viewBox="0 0 26 27"><polygon points="13.00,1.20 23.65,7.35 23.65,19.65 13.00,25.80 2.35,19.65 2.35,7.35" fill="none" stroke="#197a5c" stroke-width="1.1"/><polygon points="13.00,2.80 22.27,8.15 22.27,18.85 13.00,24.20 3.73,18.85 3.73,8.15" fill="#17704f" stroke="#17704f" stroke-width="0.8" stroke-linejoin="round"/></svg><div class="t" style="left:1230.5px;top:495.7px;width:24px;text-align:center;font-size:9.5px;color:#8ea6c2">PC</div>
<div class="a" style="left:1230.5px;top:523px;width:24px;height:24px;border-radius:50%;background:#7d3a57;"></div>
<div class="t" style="left:1230.5px;top:530.5px;width:24px;text-align:center;font-size:9.5px;color:#b9a3b6">DW</div>
<div class="a" style="left:1230.5px;top:558.5px;width:24px;height:24px;border-radius:50%;background:#5e4f70;"></div>
<div class="t" style="left:1230.5px;top:566px;width:24px;text-align:center;font-size:9.5px;color:#a69cb8">BC</div>
<div class="a" style="left:1230.5px;top:593px;width:24px;height:24px;border-radius:50%;background:#5050b0;"></div>
<svg class="a" style="left:1235px;top:598px" width="14" height="14" viewBox="0 0 14 14"><path d="M3 1.5 L5 1.2 L6.2 4 L5 5.2 C5.5 6.8 6.8 8.2 8.5 8.8 L9.8 7.6 L12.5 8.8 L12.3 10.8 C11.5 12 9.5 12.2 7.5 11 C4.5 9.2 2.3 6.5 1.8 4 C1.6 2.8 2 2 3 1.5 Z" fill="#b6bed8"/><path d="M8 2 A4 4 0 0 1 11.5 5.5 M8 0.2 A5.8 5.8 0 0 1 13.3 5.5" fill="none" stroke="#b6bed8" stroke-width="1"/></svg>
<div class="a" style="left:1230.5px;top:628.5px;width:24px;height:24px;border-radius:50%;background:#2c777a;"></div>
<svg class="a" style="left:1235px;top:633.5px" width="14" height="14" viewBox="0 0 14 14"><path d="M3 1.5 L5 1.2 L6.2 4 L5 5.2 C5.5 6.8 6.8 8.2 8.5 8.8 L9.8 7.6 L12.5 8.8 L12.3 10.8 C11.5 12 9.5 12.2 7.5 11 C4.5 9.2 2.3 6.5 1.8 4 C1.6 2.8 2 2 3 1.5 Z" fill="#aac4cc"/><path d="M8 2 A4 4 0 0 1 11.5 5.5 M8 0.2 A5.8 5.8 0 0 1 13.3 5.5" fill="none" stroke="#aac4cc" stroke-width="1"/></svg>
<div class="a" style="left:1230.5px;top:663px;width:24px;height:24px;border-radius:50%;background:radial-gradient(circle at 50% 40%,#a0a6bb 0,#5a6a98 55%,#2f5aa0 100%);"></div>
</div>
</body></html>
